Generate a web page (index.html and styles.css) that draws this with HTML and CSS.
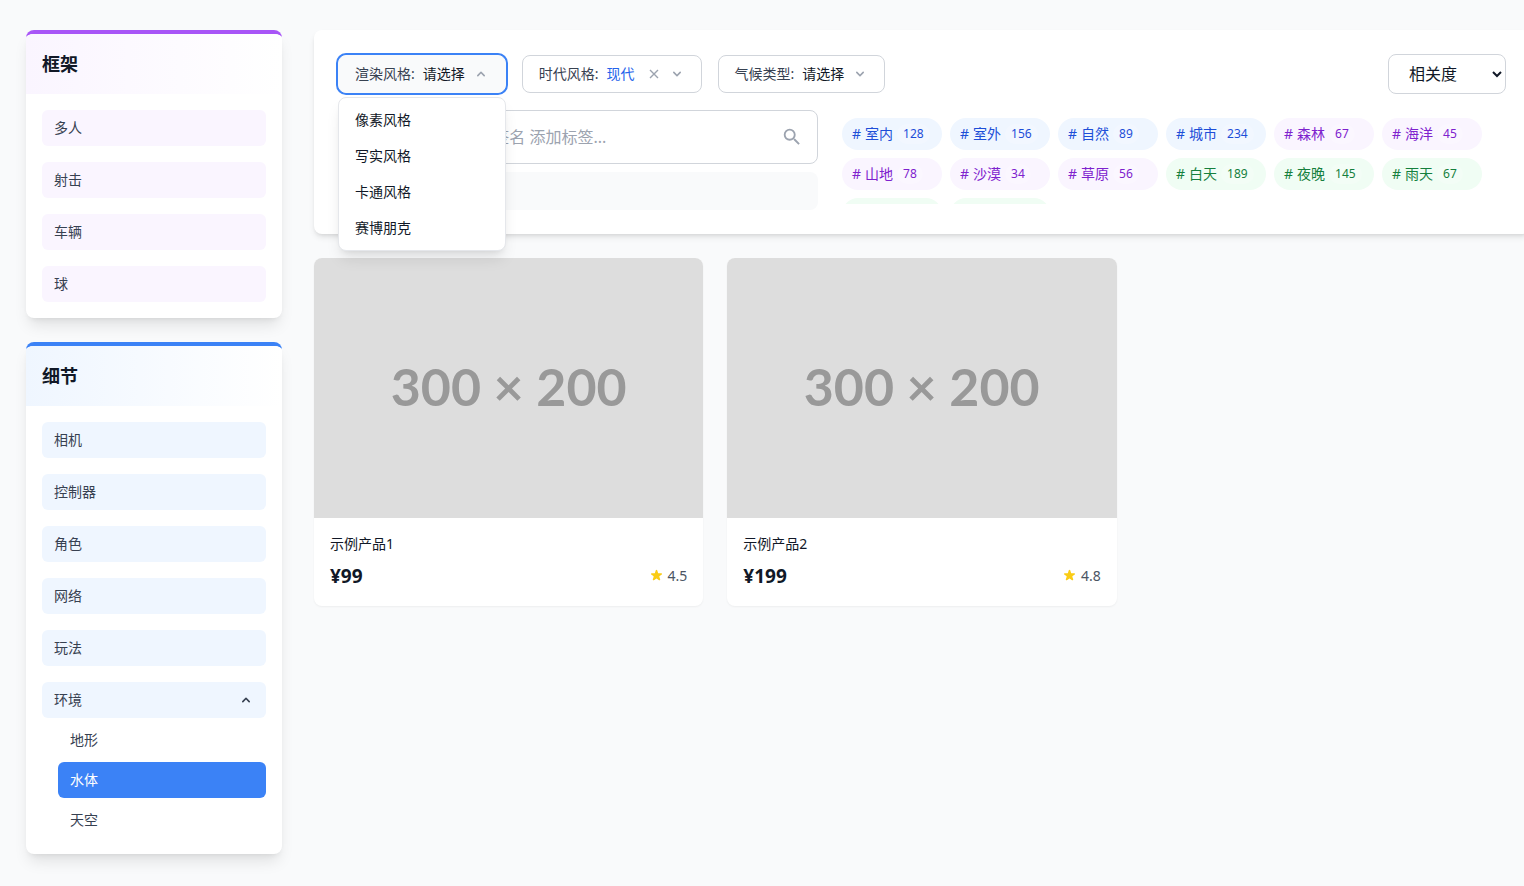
FILE: index.html
```html
<!DOCTYPE html>
<html lang="zh-CN">
<head>
<meta charset="utf-8">
<meta name="viewport" content="width=device-width, initial-scale=1">
<title>产品筛选</title>
<link rel="stylesheet" href="styles.css">
</head>
<body>
<svg class="defs" aria-hidden="true">
  <symbol id="chevron-down" viewBox="0 0 20 20"><path d="M5.293 7.293a1 1 0 011.414 0L10 10.586l3.293-3.293a1 1 0 111.414 1.414l-4 4a1 1 0 01-1.414 0l-4-4a1 1 0 010-1.414z"/></symbol>
  <symbol id="chevron-up" viewBox="0 0 20 20"><path d="M14.707 12.707a1 1 0 01-1.414 0L10 9.414l-3.293 3.293a1 1 0 01-1.414-1.414l4-4a1 1 0 011.414 0l4 4a1 1 0 010 1.414z"/></symbol>
  <symbol id="star" viewBox="0 0 20 20"><path d="M9.049 2.927c.3-.921 1.603-.921 1.902 0l1.07 3.292a1 1 0 00.95.69h3.462c.969 0 1.371 1.24.588 1.81l-2.8 2.034a1 1 0 00-.364 1.118l1.07 3.292c.3.921-.755 1.688-1.54 1.118l-2.8-2.034a1 1 0 00-1.175 0l-2.8 2.034c-.784.57-1.838-.197-1.539-1.118l1.07-3.292a1 1 0 00-.364-1.118L2.98 8.72c-.783-.57-.38-1.81.588-1.81h3.461a1 1 0 00.951-.69l1.07-3.292z"/></symbol>
</svg>
<div class="page">
  <aside class="sidebar">
    <section class="panel panel-purple">
      <h2 class="panel-title">框架</h2>
      <div class="panel-list">
        <button class="category">多人</button>
        <button class="category">射击</button>
        <button class="category">车辆</button>
        <button class="category">球</button>
      </div>
    </section>
    <section class="panel panel-blue">
      <h2 class="panel-title">细节</h2>
      <div class="panel-list">
        <button class="category">相机</button>
        <button class="category">控制器</button>
        <button class="category">角色</button>
        <button class="category">网络</button>
        <button class="category">玩法</button>
        <div class="category-group">
          <button class="category" aria-expanded="true">环境<svg class="icon" aria-hidden="true"><use href="#chevron-up"/></svg></button>
          <button class="subcategory">地形</button>
          <button class="subcategory selected">水体</button>
          <button class="subcategory">天空</button>
        </div>
      </div>
    </section>
  </aside>
  <main class="content">
    <section class="toolbar">
      <div class="filter-row">
        <div class="filters">
          <div class="filter-wrap">
            <button class="filter filter-open" aria-expanded="true"><span class="filter-label">渲染风格:</span><span>请选择</span><svg class="icon" aria-hidden="true"><use href="#chevron-up"/></svg></button>
            <div class="menu">
              <button class="menu-item">像素风格</button>
              <button class="menu-item">写实风格</button>
              <button class="menu-item">卡通风格</button>
              <button class="menu-item">赛博朋克</button>
            </div>
          </div>
          <div class="filter">
            <button class="filter-text"><span class="filter-label">时代风格:</span><span class="filter-value">现代</span></button>
            <span class="filter-actions">
              <button class="clear" aria-label="清除"><svg viewBox="0 0 16 16" aria-hidden="true"><path d="M4 4l8 8M12 4l-8 8"/></svg></button>
              <svg class="icon" aria-hidden="true"><use href="#chevron-down"/></svg>
            </span>
          </div>
          <button class="filter"><span class="filter-label">气候类型:</span><span>请选择</span><svg class="icon" aria-hidden="true"><use href="#chevron-down"/></svg></button>
        </div>
        <select class="sort" aria-label="排序"><option>相关度</option></select>
      </div>
      <div class="search-row">
        <div class="search-column">
          <label class="search">
            <input class="search-input" type="text" aria-label="搜索" placeholder="搜索产品，输入#标签名 添加标签...">
            <svg class="search-icon" viewBox="0 0 24 24" aria-hidden="true"><path d="M15.5 14h-.79l-.28-.27A6.471 6.471 0 0016 9.5 6.5 6.5 0 109.5 16c1.61 0 3.09-.59 4.23-1.57l.27.28v.79l5 4.99L20.490 19l-4.990-5zm-6 0C7.010 14 5 11.990 5 9.500S7.010 5 9.500 5 14 7.010 14 9.500 11.990 14 9.500 14z"/></svg>
          </label>
          <div class="chosen"></div>
        </div>
        <div class="tags">
          <button class="tag blue"><span>#</span><span>室内</span><span class="count">128</span></button>
          <button class="tag blue"><span>#</span><span>室外</span><span class="count">156</span></button>
          <button class="tag blue"><span>#</span><span>自然</span><span class="count">89</span></button>
          <button class="tag blue"><span>#</span><span>城市</span><span class="count">234</span></button>
          <button class="tag purple"><span>#</span><span>森林</span><span class="count">67</span></button>
          <button class="tag purple"><span>#</span><span>海洋</span><span class="count">45</span></button>
          <button class="tag purple"><span>#</span><span>山地</span><span class="count">78</span></button>
          <button class="tag purple"><span>#</span><span>沙漠</span><span class="count">34</span></button>
          <button class="tag purple"><span>#</span><span>草原</span><span class="count">56</span></button>
          <button class="tag green"><span>#</span><span>白天</span><span class="count">189</span></button>
          <button class="tag green"><span>#</span><span>夜晚</span><span class="count">145</span></button>
          <button class="tag green"><span>#</span><span>雨天</span><span class="count">67</span></button>
          <span class="tag green"></span>
          <span class="tag green"></span>
        </div>
      </div>
    </section>
    <section class="products">
      <article class="product">
        <svg class="product-image" viewBox="0 0 300 200" role="img"><text x="150" y="114">300 × 200</text></svg>
        <div class="product-body">
          <h3 class="product-name">示例产品1</h3>
          <div class="product-meta">
            <span class="price">¥99</span>
            <span class="rating"><svg class="star" aria-hidden="true"><use href="#star"/></svg>4.5</span>
          </div>
        </div>
      </article>
      <article class="product">
        <svg class="product-image" viewBox="0 0 300 200" role="img"><text x="150" y="114">300 × 200</text></svg>
        <div class="product-body">
          <h3 class="product-name">示例产品2</h3>
          <div class="product-meta">
            <span class="price">¥199</span>
            <span class="rating"><svg class="star" aria-hidden="true"><use href="#star"/></svg>4.8</span>
          </div>
        </div>
      </article>
    </section>
  </main>
</div>
</body>
</html>
```

FILE: styles.css
```css
* {
  box-sizing: border-box;
}

body {
  margin: 0;
  overflow-x: hidden;
  background: #f9fafb;
  color: #111827;
  font: 14px/20px "Noto Sans", "Noto Sans CJK SC", sans-serif;
}

button,
input,
select {
  margin: 0;
  color: inherit;
  font: inherit;
}

button {
  padding: 0;
  border: 0;
  background: none;
  text-align: left;
  cursor: pointer;
}

h2,
h3 {
  margin: 0;
}

.defs {
  display: none;
}

.icon {
  flex: none;
  width: 16px;
  height: 16px;
  fill: currentColor;
}

/* The content column bleeds slightly past the right edge */
.page {
  display: flex;
  align-items: flex-start;
  gap: 32px;
  margin-right: -6px;
  padding: 30px 0 32px 26px;
}

/* Sidebar */
.sidebar {
  display: flex;
  flex: none;
  flex-direction: column;
  gap: 24px;
  width: 256px;
}

.panel {
  overflow: hidden;
  border-top: 4px solid;
  border-radius: 8px;
  background: #fff;
  box-shadow: 0 10px 15px -3px rgba(0, 0, 0, 0.1), 0 4px 6px -4px rgba(0, 0, 0, 0.1);
}

.panel-purple {
  --tint: #faf5ff;
  border-color: #a855f7;
}

.panel-blue {
  --tint: #eff6ff;
  border-color: #3b82f6;
}

.panel-title {
  padding: 16px;
  background: linear-gradient(to right, var(--tint), #fff);
  color: #111827;
  font-size: 18px;
  font-weight: 700;
  line-height: 28px;
}

.panel-list {
  display: flex;
  flex-direction: column;
  gap: 16px;
  padding: 16px;
}

.category,
.subcategory {
  display: flex;
  align-items: center;
  justify-content: space-between;
  padding: 8px 12px;
  border-radius: 6px;
  color: #374151;
}

.category {
  background: var(--tint);
}

.category-group {
  display: flex;
  flex-direction: column;
  gap: 4px;
}

.subcategory {
  margin-left: 16px;
}

.subcategory.selected {
  background: #3b82f6;
  color: #fff;
}

/* Toolbar */
.content {
  display: flex;
  flex: 1;
  flex-direction: column;
  gap: 24px;
  min-width: 0;
}

.toolbar {
  display: flex;
  flex-direction: column;
  gap: 16px;
  padding: 24px;
  border-radius: 8px;
  background: #fff;
  box-shadow: 0 4px 6px -1px rgba(0, 0, 0, 0.1), 0 2px 4px -2px rgba(0, 0, 0, 0.1);
}

.filter-row {
  display: flex;
  align-items: center;
  justify-content: space-between;
}

.filters {
  display: flex;
  gap: 16px;
}

.filter-wrap {
  position: relative;
}

.filter {
  display: flex;
  align-items: center;
  gap: 8px;
  padding: 8px 16px;
  border: 1px solid #d1d5db;
  border-radius: 8px;
  background: #fff;
}

.filter .icon {
  color: #9ca3af;
}

.filter-open {
  border-color: #f9fafb;
  background: #f9fafb;
  box-shadow: 0 0 0 2px #3b82f6;
}

.filter-label {
  color: #374151;
}

.filter-text {
  display: flex;
  gap: 8px;
}

.filter-value {
  color: #2563eb;
}

.filter-actions {
  display: flex;
  align-items: center;
  gap: 4px;
}

.clear {
  display: flex;
  padding: 0 3px;
}

.clear svg {
  width: 16px;
  height: 16px;
  fill: none;
  stroke: #9ca3af;
  stroke-width: 1.4;
}

.menu {
  position: absolute;
  z-index: 1;
  top: 100%;
  left: 0;
  display: flex;
  flex-direction: column;
  width: 100%;
  margin-top: 4px;
  padding: 4px 0;
  border: 1px solid #e5e7eb;
  border-radius: 8px;
  background: #fff;
  box-shadow: 0 10px 15px -3px rgba(0, 0, 0, 0.1), 0 4px 6px -4px rgba(0, 0, 0, 0.1);
}

.menu-item {
  padding: 8px 16px;
}

.sort {
  width: 118px;
  height: 40px;
  padding: 0 0 0 16px;
  border: 1px solid #d1d5db;
  border-radius: 8px;
  background: #fff;
  font-size: 16px;
}

.search-row {
  display: flex;
  gap: 24px;
}

.search-column {
  display: flex;
  flex: none;
  flex-direction: column;
  gap: 8px;
  width: 480px;
}

.search {
  display: flex;
  align-items: center;
  height: 54px;
  padding: 0 14px 0 16px;
  border: 1px solid #d1d5db;
  border-radius: 8px;
}

.search-input {
  flex: 1;
  min-width: 0;
  padding: 0;
  border: 0;
  outline: 0;
  background: none;
  font-size: 16px;
  line-height: 24px;
}

.search-input::placeholder {
  color: #9ca3af;
}

.search-icon {
  flex: none;
  width: 22px;
  height: 22px;
  fill: #9ca3af;
}

.chosen {
  height: 38px;
  border-radius: 8px;
  background: #f9fafb;
}

.tags {
  display: flex;
  flex: 1;
  flex-wrap: wrap;
  align-content: flex-start;
  gap: 8px;
  height: 86px;
  margin-top: 8px;
  overflow: hidden;
}

.tag {
  display: flex;
  align-items: center;
  gap: 4px;
  width: 100px;
  height: 32px;
  padding: 0 10px;
  border-radius: 16px;
}

.blue {
  background: #eff6ff;
  color: #1d4ed8;
}

.purple {
  background: #faf5ff;
  color: #7e22ce;
}

.green {
  background: #f0fdf4;
  color: #15803d;
}

.count {
  padding: 0 6px;
  border-radius: 10px;
  background: rgba(255, 255, 255, 0.2);
  font-size: 12px;
}

/* Products */
.products {
  display: grid;
  grid-template-columns: repeat(3, 1fr);
  gap: 24px;
}

.product {
  overflow: hidden;
  border-radius: 8px;
  background: #fff;
  box-shadow: 0 1px 2px rgba(0, 0, 0, 0.05);
}

.product-image {
  display: block;
  width: 100%;
  background: #ddd;
  fill: #999;
  font: 700 40px Lato, sans-serif;
  text-anchor: middle;
}

.product-body {
  display: flex;
  flex-direction: column;
  gap: 8px;
  padding: 16px;
}

.product-name {
  font-size: 14px;
  font-weight: 400;
}

.product-meta {
  display: flex;
  align-items: center;
  justify-content: space-between;
}

.price {
  font-size: 19px;
  font-weight: 700;
  line-height: 28px;
}

.rating {
  display: flex;
  align-items: center;
  gap: 4px;
  color: #4b5563;
}

.star {
  width: 15px;
  height: 15px;
  fill: #facc15;
}
```
